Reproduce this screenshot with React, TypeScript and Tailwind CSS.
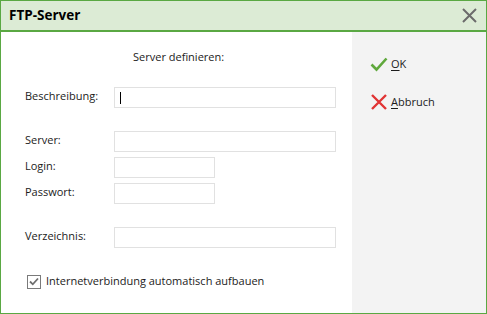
import { useState } from 'react';

const font = { fontFamily: '"Open Sans", "Noto Sans", sans-serif' };

const Field = ({ label, width, top, cursor }: { label: string; width: string; top: string; cursor?: boolean }) => (
  <div className={`flex items-center h-[21px] ${top}`}>
    <span className="w-[89px] -mt-[2px]">{label}</span>
    <div className={`h-[21px] ${width} border border-[#e1e1e1] bg-white flex items-center pl-[5px]`}>
      {cursor && <div className="w-px h-[12px] bg-black" />}
    </div>
  </div>
);

const App = () => {
  const [auto, setAuto] = useState(true);

  return (
    <div
      className="w-[487px] h-[314px] border border-[#5aa843] flex flex-col bg-white text-[11px] text-[#1b1b1b]"
      style={font}
    >
      <div className="h-[31px] shrink-0 bg-[#dcebd5] border-b-2 border-[#5aa843] flex items-center justify-between pl-[8px] pr-[9px]">
        <span className="font-bold text-[13.5px] text-black -mt-[1px]">FTP-Server</span>
        <svg width="15" height="15" viewBox="0 0 15 15" className="-mt-[1px]">
          <path d="M1 1 L14 14 M14 1 L1 14" stroke="#6b6b6b" strokeWidth="2" />
        </svg>
      </div>

      <div className="flex flex-1">
        <div className="w-[351px] flex flex-col pl-[24px]">
          <div className="mt-[17px] h-[16px] leading-[16px] pl-[108px]">Server definieren:</div>
          <Field label="Beschreibung:" width="w-[222px]" top="mt-[22px]" cursor />
          <Field label="Server:" width="w-[222px]" top="mt-[23px]" />
          <Field label="Login:" width="w-[101px]" top="mt-[5px]" />
          <Field label="Passwort:" width="w-[101px]" top="mt-[5px]" />
          <Field label="Verzeichnis:" width="w-[222px]" top="mt-[23px]" />
          <label className="flex items-center h-[21px] mt-[23px] pl-[2px] cursor-pointer">
            <span
              onClick={() => setAuto(!auto)}
              className="w-[14px] h-[14px] border border-[#7a7a7a] bg-white flex items-center justify-center"
            >
              {auto && (
                <svg width="10" height="9" viewBox="0 0 10 9">
                  <path d="M1 4.5 L3.8 7.3 L9 1.5" stroke="#6e6e6e" strokeWidth="1.8" fill="none" />
                </svg>
              )}
            </span>
            <span className="ml-[5px] -mt-[1px]">Internetverbindung automatisch aufbauen</span>
          </label>
        </div>

        <div className="flex-1 bg-[#f3f3f3] flex flex-col pl-[18px] pt-[23px]">
          <button className="flex items-center h-[18px] text-[#1b1b1b]">
            <svg width="18" height="15" viewBox="0 0 18 15">
              <path d="M1.5 7.5 L6.5 12.5 L16.5 1.5" stroke="#5fa83c" strokeWidth="2.6" fill="none" />
            </svg>
            <span className="ml-[3px]">
              <span className="underline underline-offset-2">O</span>K
            </span>
          </button>
          <button className="flex items-center h-[18px] mt-[20px] text-[#1b1b1b]">
            <svg width="18" height="16" viewBox="0 0 18 16">
              <path d="M2 1 L16 15 M16 1 L2 15" stroke="#e03434" strokeWidth="2.4" />
            </svg>
            <span className="ml-[3px]">
              <span className="underline underline-offset-2">A</span>bbruch
            </span>
          </button>
        </div>
      </div>
    </div>
  );
};

export default App;
